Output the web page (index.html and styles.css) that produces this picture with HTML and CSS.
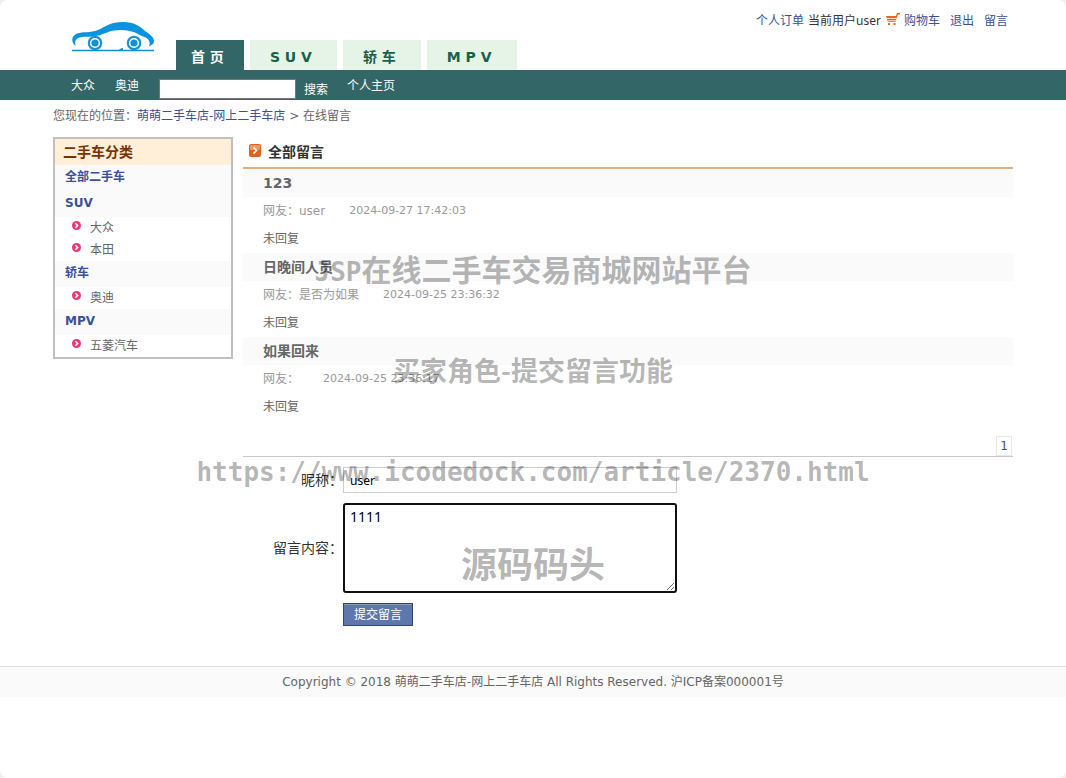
FILE: index.html
```html
<!DOCTYPE html>
<html lang="zh-CN">
<head>
<meta charset="utf-8">
<title>萌萌二手车店-网上二手车店</title>
<link rel="stylesheet" href="styles.css">
</head>
<body>
<svg class="defs" aria-hidden="true">
  <symbol id="bullet" viewBox="0 0 9 9">
    <circle cx="4.5" cy="4.5" r="4.5" fill="#e63a7d"/>
    <path d="M3.4 2.2 5.6 4.5 3.4 6.8" fill="none" stroke="#fff" stroke-width="1.5"/>
  </symbol>
</svg>
<div class="page">
  <header class="header wrap">
    <a class="logo" href="#" aria-label="萌萌二手车店">
      <svg viewBox="0 0 84 32">
        <path d="M4.500 25C0 21 0 15 6 12.500C12 10.500 19 12 27 9C36 5 39 1 52 1C63 1 69 5 74 10C81 14 85 19 82 23L78 25.500C80 20 77 17 72 15.500C66 13 62 9 50 9C39 9 36 12 28 14.500C19 16.500 12 15 7 17C3.500 19 4 22 4.500 25Z" fill="#0a93de"/>
        <g fill="none" stroke="#1a93d0" stroke-width="2.200">
          <circle cx="24" cy="22" r="6.200"/><circle cx="63" cy="22" r="6.200"/>
        </g>
        <g fill="#1290d0">
          <circle cx="24" cy="22" r="3.600"/><circle cx="63" cy="22" r="3.600"/>
          <path d="M1 28.800H83V30.200H1Z"/><path d="M47.500 29 50 27.500 52 26.800V29Z"/>
        </g>
      </svg>
    </a>
    <nav class="tabs">
      <a class="tab active" href="#">首 页</a>
      <a class="tab" href="#">S U V</a>
      <a class="tab" href="#">轿 车</a>
      <a class="tab" href="#">M P V</a>
    </nav>
    <div class="account">
      <a href="#">个人订单</a>
      <span class="current">当前用户user</span>
      <svg class="cart" viewBox="0 0 14 12">
        <path d="M0 3H10L11 0H14V1.500H12L9.500 9H2Z" fill="#e8671b"/>
        <path d="M1 5.500H11M2 7.800H10" stroke="#fff" stroke-width=".8"/>
        <path d="M2 10H4V12H2ZM7.500 10H9.500V12H7.500Z" fill="#e8671b"/>
      </svg>
      <a class="item" href="#">购物车</a>
      <a class="item" href="#">退出</a>
      <a class="item" href="#">留言</a>
    </div>
  </header>
  <div class="bar">
    <form class="bar-inner wrap">
      <a href="#">大众</a>
      <a href="#">奥迪</a>
      <input class="search" type="text" aria-label="搜索">
      <button class="search-btn" type="button">搜索</button>
      <a href="#">个人主页</a>
    </form>
  </div>
  <div class="crumbs wrap">您现在的位置：<a href="#">萌萌二手车店-网上二手车店</a> <span class="sep">&gt;</span> 在线留言</div>
  <div class="columns wrap">
    <aside class="side">
      <h2>二手车分类</h2>
      <h3><a href="#">全部二手车</a></h3>
      <h3><a href="#">SUV</a></h3>
      <ul>
        <li><svg class="bullet"><use href="#bullet"/></svg><a href="#">大众</a></li>
        <li><svg class="bullet"><use href="#bullet"/></svg><a href="#">本田</a></li>
      </ul>
      <h3><a href="#">轿车</a></h3>
      <ul><li><svg class="bullet"><use href="#bullet"/></svg><a href="#">奥迪</a></li></ul>
      <h3><a href="#">MPV</a></h3>
      <ul><li><svg class="bullet"><use href="#bullet"/></svg><a href="#">五菱汽车</a></li></ul>
    </aside>
    <main class="main">
      <h1>
        <svg class="mark" viewBox="0 0 12 13">
          <rect width="12" height="13" rx="2" fill="#dd6222"/>
          <rect x="1" y="1" width="10" height="5" rx="1" fill="#ee9a5c"/>
          <path d="M4.500 3.500 7.500 6.500 4.500 9.500" fill="none" stroke="#fff" stroke-width="1.700"/>
        </svg>全部留言
      </h1>
      <article class="msg">
        <h4>123</h4>
        <p class="meta"><span>网友：user</span><time>2024-09-27 17:42:03</time></p>
        <p>未回复</p>
      </article>
      <article class="msg">
        <h4>日晚间人员</h4>
        <p class="meta"><span>网友：是否为如果</span><time>2024-09-25 23:36:32</time></p>
        <p>未回复</p>
      </article>
      <article class="msg">
        <h4>如果回来</h4>
        <p class="meta"><span>网友：</span><time>2024-09-25 23:36:17</time></p>
        <p>未回复</p>
      </article>
      <div class="pager"><a href="#">1</a></div>
      <form class="form">
        <label for="nick">昵称：</label>
        <input id="nick" type="text" value="user">
        <label for="content">留言内容：</label>
        <textarea id="content">1111</textarea>
        <button type="button">提交留言</button>
      </form>
    </main>
  </div>
  <footer class="footer">Copyright © 2018 萌萌二手车店-网上二手车店 All Rights Reserved. 沪ICP备案000001号</footer>
  <div class="watermark">
    <div class="wm-title"><span class="wm-latin">JSP</span>在线二手车交易商城网站平台</div>
    <div class="wm-sub">买家角色-提交留言功能</div>
    <div class="wm-url">https://www.icodedock.com/article/2370.html</div>
    <div class="wm-brand">源码码头</div>
  </div>
</div>
</body>
</html>
```
FILE: styles.css
```css
* { box-sizing: border-box; margin: 0; padding: 0; }
html { background: #f0f0f0; }
body {
  font: 12px/20px "DejaVu Sans", "Noto Sans CJK SC", sans-serif;
  color: #666;
}
a { color: #3a5099; text-decoration: none; }
ul { list-style: none; }
input, textarea, button { font-family: "Noto Sans", "Noto Sans CJK SC", sans-serif; }
.defs { position: absolute; width: 0; height: 0; }
.page { position: relative; min-height: 100vh; background: #fff; border-radius: 8px; }
.wrap { max-width: 960px; margin: 0 auto; }

.header { display: flex; height: 70px; }
.logo { width: 84px; margin: 21px 21px 0 18px; }
.logo svg { display: block; width: 84px; height: 32px; }
.tabs { display: flex; gap: 6px; align-items: flex-end; }
.tab {
  height: 30px;
  padding: 0 25px 0 20px;
  background: #e6f4e8;
  color: #17614b;
  font-size: 14px;
  font-weight: bold;
  line-height: 34px;
  white-space: nowrap;
}
.tab.active { padding: 0 20px 0 15px; background: #336666; color: #fff; }
.account { display: flex; height: 20px; margin: 11px 5px 0 auto; font-family: "Noto Sans", "Noto Sans CJK SC", sans-serif; }
.current { margin: 0 5px 0 4px; color: #333; }
.cart { width: 14px; height: 12px; margin: 2px 4px 0 0; }
.item + .item { margin-left: 10px; }

.bar { background: #336666; }
.bar-inner { display: flex; height: 30px; padding-left: 18px; line-height: 32px; }
.bar a { color: #fff; margin-right: 20px; }
.search { width: 137px; height: 20px; margin-top: 9px; border: 1px solid #767676; background: #fff; }
.search-btn { height: 20px; margin: 10px 19px 0 8px; border: 0; background: none; color: #fff; font-size: 12px; line-height: 20px; }

.crumbs { height: 37px; line-height: 32px; }

.columns { display: flex; gap: 10px; align-items: flex-start; }
.side { flex: 0 0 180px; border: 2px solid #c0c0c0; }
.side h2 { height: 26px; padding-left: 8px; background: #ffefd9; color: #7a3300; font-size: 14px; line-height: 26px; }
.side h3 { height: 26px; padding-left: 10px; background: #fafafa; font-size: 12px; line-height: 25px; }
.side li { display: flex; height: 22px; padding-left: 17px; line-height: 22px; }
.side li a { color: #666; }
.bullet { width: 9px; height: 9px; margin: 4px 9px 0 0; }

.main { flex: 1; }
.main h1 { display: flex; gap: 7px; height: 32px; padding-left: 6px; border-bottom: 2px solid #e0b080; color: #333; font-size: 14px; line-height: 30px; }
.mark { width: 12px; height: 13px; margin-top: 7px; }
.msg { line-height: 28px; }
.msg h4 { height: 28px; padding-left: 20px; background: #fafafa; font-size: 14px; }
.msg p { height: 28px; padding-left: 20px; }
.msg .meta { display: flex; gap: 24px; color: #999; }
.meta time { font-size: 11px; }
.pager { display: flex; justify-content: flex-end; margin-top: 15px; padding-right: 1px; border-bottom: 1px solid #c8c8c8; }
.pager a { width: 16px; height: 20px; border: 1px solid #e8e8e8; text-align: center; line-height: 18px; }

.form { display: grid; grid-template-columns: 100px 334px; row-gap: 10px; align-items: center; padding-top: 10px; color: #333; font-size: 14px; }
.form label { justify-self: end; }
.form input { height: 26px; padding: 0 6px; border: 1px solid #ccc; font-size: 12px; }
.form textarea { display: block; height: 90px; padding: 2px 5px; border: 2px solid #101010; border-radius: 3px; font-size: 14px; line-height: 20px; resize: vertical; }
.form button { grid-column: 2; justify-self: start; width: 70px; height: 23px; border: 1px solid #2c4576; background: #5f78ab; box-shadow: inset 0 1px #8a9cc2; color: #fff; font-size: 12px; line-height: 21px; }

.footer { margin-top: 40px; height: 31px; border-top: 1px solid #ddd; background: #fafafa; text-align: center; line-height: 30px; }

.watermark {
  position: absolute;
  inset: 0;
  display: flex;
  flex-direction: column;
  align-items: center;
  padding-top: 248px;
  color: rgba(0, 0, 0, .3);
  font-family: "Noto Sans CJK SC", sans-serif;
  font-weight: bold;
  line-height: 40px;
  white-space: nowrap;
  pointer-events: none;
}
.wm-title { font-size: 30px; }
.wm-latin, .wm-url { font-family: "DejaVu Sans Mono", monospace; font-size: 26px; }
.wm-sub { margin-top: 58px; font-size: 27px; }
.wm-url { margin-top: 62px; }
.wm-brand { margin-top: 50px; font-size: 36px; }
```
